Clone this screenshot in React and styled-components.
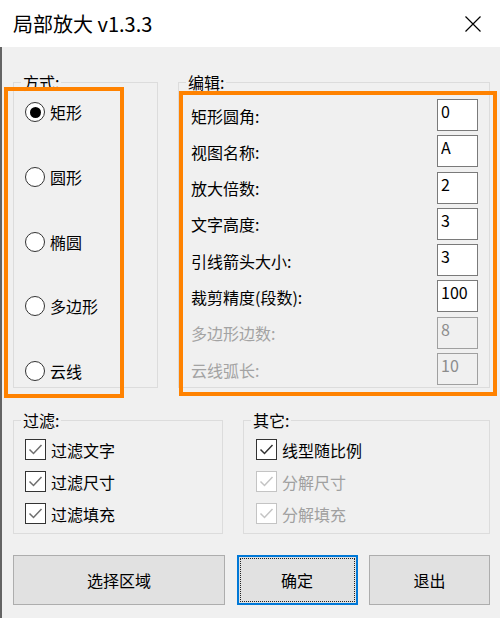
import React from 'react';
import styled, { createGlobalStyle, css } from 'styled-components';

const Global = createGlobalStyle`
  html, body { margin: 0; padding: 0; background: #f0f0f0; }
  body { font-family: "Noto Sans CJK SC", "Noto Sans", sans-serif; color: #000; }
  * { box-sizing: border-box; }
`;

const Window = styled.div`
  width: 500px;
  height: 618px;
  overflow: hidden;
  display: flex;
  flex-direction: column;
  background: #f0f0f0;
`;

const TitleBar = styled.div`
  height: 47px;
  flex: none;
  background: #fff;
  display: flex;
  align-items: center;
  justify-content: space-between;
  padding: 0 19px 0 13px;
`;

const Title = styled.div`
  font-size: 20px;
  line-height: 24px;
  color: #000;
`;

const CloseIcon = styled.svg`
  width: 16px;
  height: 16px;
  display: block;
`;

const Body = styled.div`
  flex: 1;
  border-left: 2px solid #646464;
  padding: 25px 10px 0 11px;
  display: flex;
  flex-direction: column;
`;

const Row = styled.div`
  display: flex;
  gap: 20px;
  margin-top: ${p => p.$mt || 0}px;
`;

const GroupWrap = styled.div`
  position: relative;
  width: ${p => p.$w}px;
  flex: none;
  display: flex;
`;

const Group = styled.fieldset`
  margin: 0;
  padding: 0;
  min-width: 0;
  width: 100%;
  border: 1px solid #dcdcdc;
`;

const Caption = styled.legend`
  margin-left: 7px;
  padding: 0 2px;
  font-size: 16px;
  line-height: 20px;
  color: #000;
`;

const Highlight = styled.div`
  position: absolute;
  left: ${p => p.$l}px;
  top: ${p => p.$t}px;
  width: ${p => p.$w}px;
  height: ${p => p.$h}px;
  border: 4px solid #ff8200;
  pointer-events: none;
`;

const RadioList = styled.div`
  display: flex;
  flex-direction: column;
  gap: 44.75px;
  padding: 10px 0 6px 11px;
`;

const OptionRow = styled.label`
  display: flex;
  align-items: center;
  gap: 5px;
  height: ${p => p.$h || 20}px;
  font-size: 16px;
  line-height: 20px;
  color: ${p => (p.$disabled ? '#a0a0a0' : '#000')};
`;

const RadioDot = styled.span`
  width: 20px;
  height: 20px;
  flex: none;
  border-radius: 50%;
  border: 1.5px solid #333;
  background: #fff;
  position: relative;
  ${p =>
    p.$on &&
    css`
      &::after {
        content: '';
        position: absolute;
        inset: 3.5px;
        border-radius: 50%;
        background: #000;
      }
    `}
`;

const FieldList = styled.div`
  display: grid;
  grid-auto-rows: 32px;
  row-gap: 4.3px;
  padding: 7px 11px 2px 12px;
`;

const FieldRow = styled.div`
  display: flex;
  align-items: center;
  justify-content: space-between;
`;

const FieldLabel = styled.span`
  font-size: 16px;
  line-height: 20px;
  padding-top: 1px;
  color: ${p => (p.$disabled ? '#a3a3a3' : '#000')};
`;

const FieldInput = styled.input`
  width: 41px;
  height: 32px;
  margin: 0;
  padding: 1px 2px 9px 3px;
  border: 1px solid ${p => (p.disabled ? '#a0a0a0' : '#7a7a7a')};
  background: ${p => (p.disabled ? '#f0f0f0' : '#fff')};
  color: ${p => (p.disabled ? '#8c8c8c' : '#000')};
  font-family: "Noto Sans CJK SC", "Noto Sans", sans-serif;
  font-size: 16px;
  line-height: 20px;
  outline: none;
  -webkit-text-fill-color: ${p => (p.disabled ? '#8c8c8c' : '#000')};
  opacity: 1;
`;

const CheckList = styled.div`
  display: flex;
  flex-direction: column;
  gap: 11px;
  padding: 9px 0 9px ${p => p.$pl}px;
`;

const CheckBox = styled.span`
  width: 21px;
  height: 21px;
  flex: none;
  border: 1.5px solid ${p => (p.$disabled ? '#c4c4c4' : '#333')};
  background: #fff;
  display: flex;
  align-items: center;
  justify-content: center;
`;

const ButtonRow = styled.div`
  display: grid;
  grid-template-columns: 212px 121px 121px;
  column-gap: 11.5px;
  margin-top: 21px;
`;

const Button = styled.button`
  height: 50px;
  margin: 0;
  padding: 0;
  background: #e1e1e1;
  border: 1px solid #adadad;
  font-family: "Noto Sans CJK SC", "Noto Sans", sans-serif;
  font-size: 16px;
  line-height: 20px;
  color: #000;
  position: relative;
  ${p =>
    p.$focused &&
    css`
      border: 2px solid #0078d7;
      &::after {
        content: '';
        position: absolute;
        inset: 1px;
        border: 1px dotted #222;
      }
    `}
`;

const Check = ({ color }) => (
  <svg width="17" height="17" viewBox="0 0 17 17">
    <polyline points="2.5,8.5 6.5,12.5 14.5,4" fill="none" stroke={color} strokeWidth="1.5" />
  </svg>
);

const CheckItem = ({ label, disabled, mark }) => (
  <OptionRow $h={21} $disabled={disabled}>
    <CheckBox $disabled={disabled}>
      <Check color={disabled ? '#c4c4c4' : mark} />
    </CheckBox>
    {label}
  </OptionRow>
);

const methods = ['矩形', '圆形', '椭圆', '多边形', '云线'];

const fields = [
  { label: '矩形圆角:', value: '0' },
  { label: '视图名称:', value: 'A' },
  { label: '放大倍数:', value: '2' },
  { label: '文字高度:', value: '3' },
  { label: '引线箭头大小:', value: '3' },
  { label: '裁剪精度(段数):', value: '100' },
  { label: '多边形边数:', value: '8', disabled: true },
  { label: '云线弧长:', value: '10', disabled: true },
];

export default function App() {
  return (
    <>
      <Global />
      <Window>
        <TitleBar>
          <Title>局部放大 v1.3.3</Title>
          <CloseIcon viewBox="0 0 16 16">
            <path d="M0.5 0.5 L15.5 15.5 M15.5 0.5 L0.5 15.5" stroke="#000" strokeWidth="1.2" fill="none" />
          </CloseIcon>
        </TitleBar>
        <Body>
          <Row>
            <GroupWrap $w={145}>
              <Group>
                <Caption>方式:</Caption>
                <RadioList>
                  {methods.map((m, i) => (
                    <OptionRow key={m}>
                      <RadioDot $on={i === 0} />
                      {m}
                    </OptionRow>
                  ))}
                </RadioList>
              </Group>
              <Highlight $l={-9} $t={15} $w={120} $h={311} />
            </GroupWrap>
            <GroupWrap $w={312}>
              <Group>
                <Caption>编辑:</Caption>
                <FieldList>
                  {fields.map(f => (
                    <FieldRow key={f.label}>
                      <FieldLabel $disabled={f.disabled}>{f.label}</FieldLabel>
                      <FieldInput defaultValue={f.value} disabled={f.disabled} readOnly />
                    </FieldRow>
                  ))}
                </FieldList>
              </Group>
              <Highlight $l={1} $t={19} $w={318} $h={305} />
            </GroupWrap>
          </Row>
          <Row $mt={22}>
            <GroupWrap $w={210}>
              <Group>
                <Caption>过滤:</Caption>
                <CheckList $pl={11}>
                  <CheckItem label="过滤文字" mark="#6e6e6e" />
                  <CheckItem label="过滤尺寸" mark="#6e6e6e" />
                  <CheckItem label="过滤填充" mark="#6e6e6e" />
                </CheckList>
              </Group>
            </GroupWrap>
            <GroupWrap $w={247}>
              <Group>
                <Caption>其它:</Caption>
                <CheckList $pl={12}>
                  <CheckItem label="线型随比例" mark="#333" />
                  <CheckItem label="分解尺寸" disabled />
                  <CheckItem label="分解填充" disabled />
                </CheckList>
              </Group>
            </GroupWrap>
          </Row>
          <ButtonRow>
            <Button>选择区域</Button>
            <Button $focused>确定</Button>
            <Button>退出</Button>
          </ButtonRow>
        </Body>
      </Window>
    </>
  );
}
